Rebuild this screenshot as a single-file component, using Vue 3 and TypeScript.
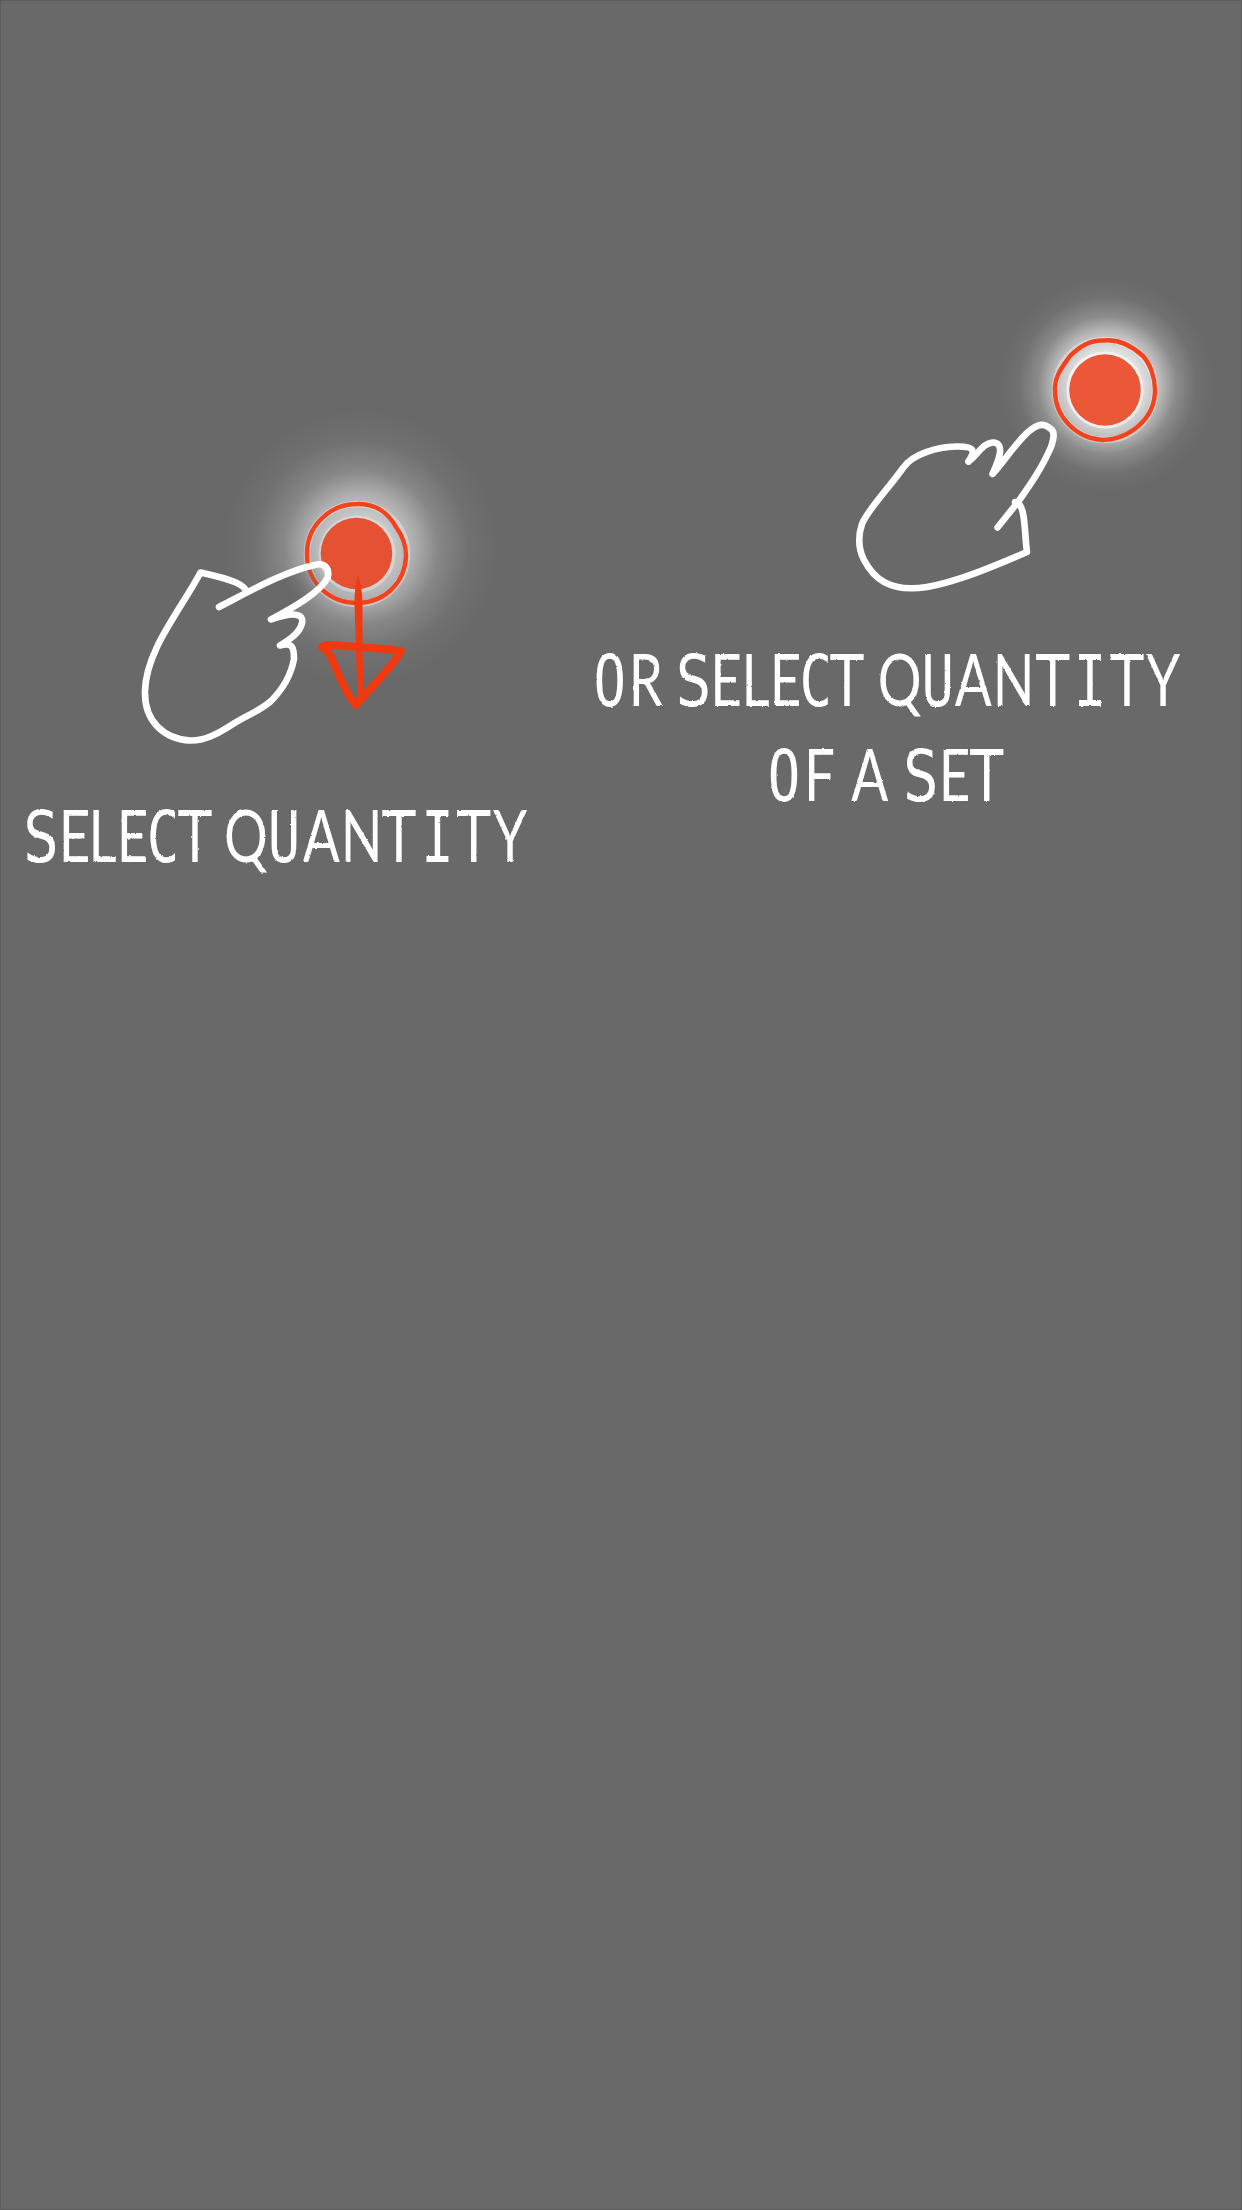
<script setup lang="ts">
interface Glyph { char: string; x: number; face: string }
interface Line { y: number; glyphs: Glyph[] }

// Horizontal squeeze applied to the lettering
const SQUEEZE = 0.76

// Letters that use a different face to get the hand-lettered proportions
const faces: Record<string, string> = { I: 'mono', O: 'mono', C: 'mono', U: 'mono', S: 'wide', T: 'wide' }

function line(text: string, y: number, centers: number[]): Line {
  return {
    y,
    glyphs: [...text].map((char, i) => ({ char, x: centers[i] / SQUEEZE, face: faces[char] ?? 'plain' })),
  }
}

const leftLines: Line[] = [
  line('SELECT QUANTITY', 862, [41, 74.5, 102.5, 132.5, 163, 195, 220, 246, 284, 321.3, 361.7, 399, 437.5, 473.7, 510]),
]
const rightLines: Line[] = [
  line('OR SELECT QUANTITY', 706.5, [609.7, 646, 670, 693.3, 726, 755.5, 785.5, 815.7, 847, 873, 899.7, 937.7, 973.3, 1013.7, 1052.7, 1090, 1127, 1163]),
  line('OF A SET', 801.3, [784, 819.5, 845, 869.7, 895, 920.7, 954.5, 986.7]),
]
</script>

<template>
  <main class="overlay">
    <figure class="hint">
      <svg viewBox="0 0 552 900" width="552" height="900">
        <defs>
          <radialGradient id="glowLeft">
            <stop offset="0" stop-color="#fff" stop-opacity=".66" />
            <stop offset=".24" stop-color="#fff" stop-opacity=".62" />
            <stop offset=".38" stop-color="#fff" stop-opacity=".47" />
            <stop offset=".56" stop-color="#fff" stop-opacity=".2" />
            <stop offset=".78" stop-color="#fff" stop-opacity=".05" />
            <stop offset="1" stop-color="#fff" stop-opacity="0" />
          </radialGradient>
          <linearGradient id="handFill" gradientUnits="userSpaceOnUse" x1="290" y1="590" x2="322" y2="572">
            <stop offset="0" stop-color="#696969" />
            <stop offset="1" stop-color="#696969" stop-opacity="0" />
          </linearGradient>
          <filter id="chalk" x="-5%" y="-20%" width="110%" height="140%">
            <feTurbulence type="fractalNoise" baseFrequency=".22" numOctaves="2" seed="4" result="n" />
            <feDisplacementMap in="SourceGraphic" in2="n" scale="2.4" xChannelSelector="R" yChannelSelector="G" />
          </filter>
        </defs>
        <circle cx="361" cy="547" r="138" fill="url(#glowLeft)" />
        <circle class="halo" cx="357" cy="554" r="50" />
        <circle class="rim" cx="357" cy="554" r="36.500" />
        <circle cx="356.500" cy="553.500" r="35.800" fill="#e55233" />
        <path class="ring" d="M357 504C376 503 389 514 396 527C402 535 406 546 406 556C405 582 386 602 358 603C329 603 307 582 307 555C306 527 329 504 357 504Z" />
        <path fill="url(#handFill)" d="M247 592C274 578 296 569 317 564C326 562 331 570 327 577C319 592 296 606 272 619C300 611 309 620 297 633L280 645C298 643 293 670 284 683C271 706 257 710 244 718C220 733 206 741 191 741C168 740 144 722 145 693C145 650 181 599 200 573C223 578 241 586 247 592Z" />
        <path class="hand" d="M219 607C250 591 285 571 317 564.500C326 563 330 570 327.500 578C320 592 296 606 271 619.500C293 612 304 613 302 623C300 632 292 638 280 645.500C293 642 294 648 294 659C291 675 282 690 271 701C260 711 247 715 233 724C216 735 204 741 190 740.500C165 739 144 722 145 691C146 650 180 611 200.500 572.500C221 577 246 583 246 592" />
        <path class="arrow-stem" d="M358 575C356 582 354.500 590 354.500 604L356 650L357.500 702L364 702L362.500 650L362.500 604C362.500 590 360 582 358 575Z" />
        <path class="arrow-head" d="M322 647C328 643 336 646 356 647C374 648 388 649 401 651C394 665 375 683 356 705C345 694 336 667 330 655C328 651 324 649 322 647Z" />
        <text v-for="l in leftLines" :key="l.y" class="caption" :transform="`scale(${SQUEEZE} 1)`" :y="l.y" filter="url(#chalk)"><tspan v-for="(g, i) in l.glyphs" :key="i" :x="g.x" :class="g.face">{{ g.char }}</tspan></text>
      </svg>
    </figure>

    <figure class="hint">
      <svg viewBox="552 0 690 900" width="690" height="900">
        <defs>
          <radialGradient id="glowRight">
            <stop offset="0" stop-color="#fff" stop-opacity=".86" />
            <stop offset=".32" stop-color="#fff" stop-opacity=".8" />
            <stop offset=".48" stop-color="#fff" stop-opacity=".56" />
            <stop offset=".64" stop-color="#fff" stop-opacity=".23" />
            <stop offset=".82" stop-color="#fff" stop-opacity=".05" />
            <stop offset="1" stop-color="#fff" stop-opacity="0" />
          </radialGradient>
        </defs>
        <circle cx="1107" cy="385" r="108" fill="url(#glowRight)" />
        <circle class="halo" cx="1105" cy="390" r="50" />
        <circle class="rim bright" cx="1105" cy="390" r="36.500" />
        <circle cx="1105" cy="390" r="35.800" fill="#ea5838" />
        <path class="ring" d="M1104 340.500C1119 339 1133 347 1143 356C1150 364 1155 377 1155 390C1155 418 1131 439 1102 440C1076 438 1055 417 1055 391C1054 376 1063 366 1070 356C1079 347 1089 340 1104 340.500Z" />
        <path fill="#696969" d="M992 474C1011 449 1028 428 1042 424C1052 424 1055 431 1053 438C1048 457 1032 480 1017 502Z" />
        <path class="hand" d="M968.500 461.500C977 456 983 442 994 442.500C1005 444 999 460 992.500 474C1003 463 1014 445 1028 432C1039 423 1044 423 1051 429C1055 432 1054 438 1051 447C1042 468 1030 485 1018 502L997.500 527.500" />
        <path class="hand" d="M1015 502C1026 503 1024 530 1027 552C990 568 956 582 927 587C888 593 873 577 864 560C858 548 858 536 862 524C868 509 889 488 903 468C913 453 939 447 956 446.500C976 446 975 451 968.500 461.500" />
        <text v-for="l in rightLines" :key="l.y" class="caption" :transform="`scale(${SQUEEZE} 1)`" :y="l.y" filter="url(#chalk)"><tspan v-for="(g, i) in l.glyphs" :key="i" :x="g.x" :class="g.face">{{ g.char }}</tspan></text>
      </svg>
    </figure>
  </main>
</template>

<style>
body {
  background: #696969;
}
</style>

<style scoped>
.overlay {
  display: flex;
  align-items: flex-start;
  box-sizing: border-box;
  width: 1242px;
  height: 2210px;
  background: #696969;
  box-shadow: inset 0 0 0 1px #5c5c5c;
}
.hint {
  margin: 0;
}
.hint svg {
  display: block;
  overflow: visible;
}
.halo {
  fill: none;
  stroke: rgba(255, 255, 255, 0.35);
  stroke-width: 6.5;
}
.rim {
  fill: none;
  stroke: rgba(255, 255, 255, 0.3);
  stroke-width: 4;
}
.rim.bright {
  stroke: rgba(255, 255, 255, 0.6);
}
.ring {
  fill: none;
  stroke: #f4421c;
  stroke-width: 4.4;
}
.hand {
  fill: none;
  stroke: #fff;
  stroke-width: 6.6;
  stroke-linecap: round;
  stroke-linejoin: round;
}
.arrow-stem {
  fill: #ef3a12;
}
.arrow-head {
  fill: none;
  stroke: #f2380e;
  stroke-width: 7.8;
  stroke-linejoin: round;
}
.caption {
  font: 400 72px Lato, "Open Sans", sans-serif;
  text-anchor: middle;
  fill: #fff;
}
.mono {
  font-family: "DejaVu Sans Mono", monospace;
  font-size: 71px;
}
.wide {
  font-family: "DejaVu Sans", sans-serif;
  font-size: 71px;
}
</style>
